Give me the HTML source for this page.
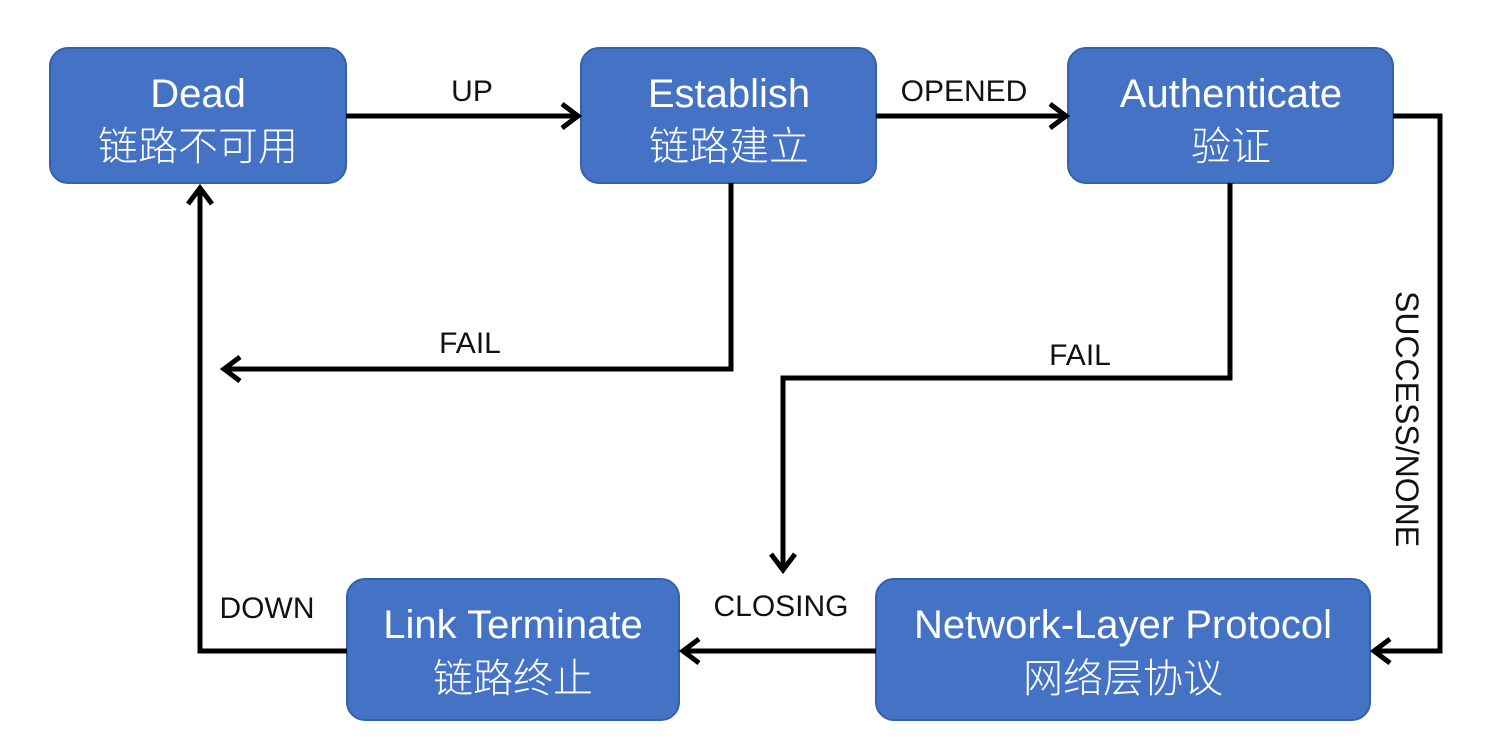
<!DOCTYPE html>
<html><head><meta charset="utf-8"><style>
html,body{margin:0;padding:0;background:#fff;}
svg{display:block}
.t{font-family:"Liberation Sans","Noto Sans CJK SC",sans-serif;fill:#fff;font-size:40px;text-anchor:middle}
.c{font-weight:300}
.l{font-family:"Liberation Sans",sans-serif;fill:#111;font-size:30px;text-anchor:middle}
</style></head><body>
<svg width="1488" height="750" viewBox="0 0 1488 750">
<g fill="#4472C4" stroke="#3461AE" stroke-width="2">
<rect x="50" y="48" width="296" height="135" rx="18"/>
<rect x="581" y="48" width="295" height="135" rx="18"/>
<rect x="1068" y="48" width="325" height="135" rx="18"/>
<rect x="347" y="579" width="332" height="141" rx="18"/>
<rect x="876" y="579" width="494" height="141" rx="18"/>
</g>
<g fill="none" stroke="#000" stroke-width="5" stroke-linejoin="miter">
<path d="M346 116H576"/><path d="M562 104L578 116L562 128"/>
<path d="M876 116H1064"/><path d="M1050 104L1066 116L1050 128"/>
<path d="M1393 116H1440V651H1376"/><path d="M1390 639L1374 651L1390 663"/>
<path d="M731 183V369H226"/><path d="M240 357L224 369L240 381"/>
<path d="M1230 183V378H783V568"/><path d="M771 554L783 570L795 554"/>
<path d="M876 651H685"/><path d="M699 639L683 651L699 663"/>
<path d="M347 651H200V190"/><path d="M188 204L200 188L212 204"/>
</g>
<text class="t" x="198" y="107">Dead</text>
<text class="t c" x="198" y="160">链路不可用</text>
<text class="t" x="729" y="107">Establish</text>
<text class="t c" x="729" y="160">链路建立</text>
<text class="t" x="1231" y="107">Authenticate</text>
<text class="t c" x="1231" y="160">验证</text>
<text class="t" x="513" y="638">Link Terminate</text>
<text class="t c" x="513" y="692">链路终止</text>
<text class="t" x="1123" y="638">Network-Layer Protocol</text>
<text class="t c" x="1123" y="692">网络层协议</text>
<text class="l" x="472" y="101">UP</text>
<text class="l" x="964" y="101">OPENED</text>
<text class="l" x="470" y="353">FAIL</text>
<text class="l" x="1080" y="365">FAIL</text>
<text class="l" x="781" y="616">CLOSING</text>
<text class="l" x="267" y="618">DOWN</text>
<text class="l" style="font-size:32px" transform="translate(1396,419) rotate(90)">SUCCESS/NONE</text>
</svg>
</body></html>
